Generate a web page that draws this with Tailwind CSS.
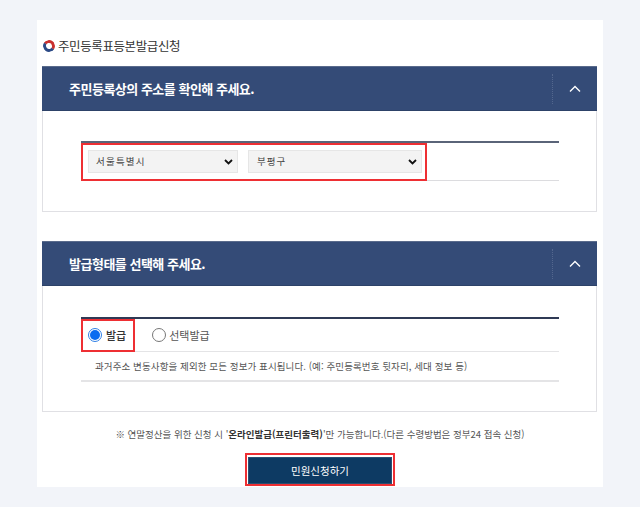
<!DOCTYPE html>
<html lang="ko">
<head>
  <meta charset="UTF-8" />
  <title>주민등록표등본 발급신청</title>
  <script src="https://cdn.jsdelivr.net/npm/@tailwindcss/browser@4"></script>
</head>
<body class="bg-[#f2f4f9] font-['Noto_Sans_CJK_KR','Noto_Sans',sans-serif] w-[640px] h-[507px] overflow-hidden">
  <div class="mx-[37px] mt-[20px] w-[566px] h-[467px] bg-white px-[5px] pt-[18px]">
    <h1 class="flex items-center gap-[3px] h-[16px] text-[12.5px] tracking-[-0.4px] text-[#333] ml-[1px]">
      <span class="w-[12px] h-[12px] rounded-full border-[3px] border-t-[#c8302f] border-r-[#c8302f] border-b-[#2b4a86] border-l-[#2b4a86] -rotate-12"></span>
      주민등록표등본발급신청
    </h1>

    <section class="mt-[12px] w-[555px] h-[146px] border border-[#e0e0e4] border-t-0">
      <div class="-mx-px h-[45px] bg-[#344b77] border-t border-t-[#5a6b8c] border-b border-b-[#2d4268] flex items-center justify-between text-white">
        <h2 class="pl-[27px] text-[13px] font-bold tracking-[-0.5px]">주민등록상의 주소를 확인해 주세요.</h2>
        <div class="w-[45px] h-[30px] border-l border-dotted border-[#53678e] flex items-center justify-center">
          <svg width="12" height="8" viewBox="0 0 12 8" fill="none" stroke="white" stroke-width="1.4"><path d="M1 6.5 L6 1.5 L11 6.5"/></svg>
        </div>
      </div>
      <div class="relative mx-[38px] mt-[30px] w-[478px] h-[40px] border-t-2 border-t-[#5a6478] border-b border-b-[#dcdcdf] flex items-center pl-[7px] gap-[10px]">
        <div class="w-[150px] h-[23px] bg-[#f3f3f3] border border-[#e6e6e6] flex items-center justify-between pl-[7px] pr-[4px] text-[9.5px] tracking-[1.2px] text-[#444]">
          <span>서울특별시</span>
          <svg width="9" height="6" viewBox="0 0 9 6" fill="none" stroke="#111" stroke-width="1.8"><path d="M1 1 L4.5 4.5 L8 1"/></svg>
        </div>
        <div class="w-[174px] h-[23px] bg-[#f3f3f3] border border-[#e6e6e6] flex items-center justify-between pl-[8px] pr-[4px] text-[9.5px] tracking-[1px] text-[#444]">
          <span>부평구</span>
          <svg width="9" height="6" viewBox="0 0 9 6" fill="none" stroke="#111" stroke-width="1.8"><path d="M1 1 L4.5 4.5 L8 1"/></svg>
        </div>
        <div class="absolute left-0 top-0 w-[346px] h-[38px] border-2 border-[#ee2f33]"></div>
      </div>
    </section>

    <section class="mt-[29px] w-[555px] h-[171px] border border-[#e0e0e4] border-t-0">
      <div class="-mx-px h-[45px] bg-[#344b77] border-t border-t-[#5a6b8c] border-b border-b-[#2d4268] flex items-center justify-between text-white">
        <h2 class="pl-[27px] text-[13px] font-bold tracking-[-0.5px]">발급형태를 선택해 주세요.</h2>
        <div class="w-[45px] h-[30px] border-l border-dotted border-[#53678e] flex items-center justify-center">
          <svg width="12" height="8" viewBox="0 0 12 8" fill="none" stroke="white" stroke-width="1.4"><path d="M1 6.5 L6 1.5 L11 6.5"/></svg>
        </div>
      </div>
      <div class="relative mx-[38px] mt-[31px] w-[478px] border-t-2 border-t-[#2f3a55]">
        <div class="h-[33px] border-b border-[#e4e4e6] flex items-center pl-[7px] text-[11px] text-[#333]">
          <span class="w-[14px] h-[14px] rounded-full border border-[#2f7fe6] flex items-center justify-center"><span class="w-[10px] h-[10px] rounded-full bg-[#0a6cf0]"></span></span>
          <span class="ml-[4px] font-medium">발급</span>
          <span class="ml-[26px] w-[14px] h-[14px] rounded-full border border-[#777]"></span>
          <span class="ml-[3px] text-[#555]">선택발급</span>
        </div>
        <p class="h-[30px] border-b-2 border-[#e4e4e6] pl-[14px] flex items-center text-[9.5px] tracking-[0.1px] text-[#555]">과거주소 변동사항을 제외한 모든 정보가 표시됩니다. (예: 주민등록번호 뒷자리, 세대 정보 등)</p>
        <div class="absolute left-0 top-0 w-[54px] h-[33px] border-2 border-[#ee2f33]"></div>
      </div>
    </section>

    <p class="mt-[15px] text-center text-[9.5px] tracking-[0px] text-[#555] h-[14px] leading-[14px]">※ 연말정산을 위한 신청 시 '<b class="text-[#333]">온라인발급(프린터출력)</b>'만 가능합니다.(다른 수령방법은 정부24 접속 신청)</p>

    <div class="mt-[12px] mx-auto w-[150px] h-[33px] border-2 border-[#ee2f33] p-[1px]">
      <button class="w-full h-full bg-[#0d3a63] border border-[#2c4f72] text-white text-[10.5px]">민원신청하기</button>
    </div>
  </div>
</body>
</html>
